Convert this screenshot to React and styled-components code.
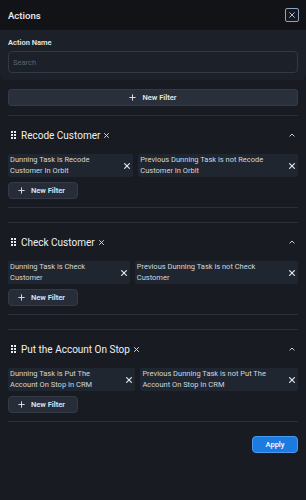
import React from 'react'
import styled, { createGlobalStyle } from 'styled-components'

const GlobalStyle = createGlobalStyle`
  html, body {
    margin: 0;
    padding: 0;
    background: #181b21;
  }
  body {
    font-family: Roboto, 'Liberation Sans', sans-serif;
    color: #e3e6eb;
  }
  * { box-sizing: border-box; }
  svg { flex: none; }
`

const Drawer = styled.div`
  width: 306px;
  height: 500px;
  background: #181b21;
  display: flex;
  flex-direction: column;
  overflow: hidden;
`

const Header = styled.div`
  height: 30px;
  flex: none;
  background: #111317;
  display: flex;
  align-items: center;
  justify-content: space-between;
  padding: 0 7px 0 8px;
`

const Title = styled.h1`
  margin: 0;
  font-size: 9.6px;
  font-weight: 500;
  color: #eceef2;
`

const CloseButton = styled.button`
  width: 14px;
  height: 14px;
  padding: 0;
  display: flex;
  align-items: center;
  justify-content: center;
  background: #15181d;
  border: 1px solid #8ea4c6;
  border-radius: 2px;
  color: #b9bfc8;
`

const NamePanel = styled.div`
  background: #1c2129;
  border-radius: 0 0 6px 6px;
  padding: 8px 8px 7px;
`

const Label = styled.div`
  font-size: 7.5px;
  font-weight: 600;
  line-height: 10px;
  color: #e4e7ec;
  margin-bottom: 3px;
`

const SearchInput = styled.input`
  display: block;
  width: 100%;
  height: 22px;
  background: #1b2029;
  border: 1px solid #323944;
  border-radius: 4px;
  padding: 0 4px;
  font-family: inherit;
  font-size: 7.5px;
  color: #e4e7ec;
  outline: none;
  &::placeholder { color: #5d6470; }
`

const Body = styled.div`
  padding: 9px 8px 0;
  display: flex;
  flex-direction: column;
`

const Button = styled.button`
  height: 17px;
  display: flex;
  align-items: center;
  justify-content: center;
  gap: 6px;
  width: ${p => (p.$wide ? '100%' : '70px')};
  padding: 0 ${p => (p.$wide ? '0' : '3px')} 0 0;
  background: ${p => (p.$wide ? '#29303b' : '#262d38')};
  border: 1px solid #343b47;
  border-radius: ${p => (p.$wide ? '3px' : '4px')};
  font-family: inherit;
  font-size: 7.5px;
  font-weight: 600;
  color: #e2e6ec;
`

const Section = styled.section`
  border-top: 1px solid #2b3038;
  border-bottom: 1px solid #2b3038;
  padding: 8px 0;
  margin-top: ${p => (p.$first ? '9px' : '14px')};
`

const SectionHead = styled.div`
  height: 22px;
  display: flex;
  align-items: center;
  padding: 0 3px;
  margin-bottom: 8px;
`

const SectionTitle = styled.h2`
  margin: 0 0 0 5px;
  font-size: 10px;
  font-weight: 400;
  color: #eef0f3;
`

const RemoveGroup = styled.span`
  margin-left: 4px;
  display: flex;
  align-items: center;
  color: #d5d9df;
`

const Collapse = styled.span`
  margin-left: auto;
  display: flex;
  align-items: center;
  color: #c9ced6;
`

const Chips = styled.div`
  display: flex;
  gap: 5px;
  margin-bottom: 5px;
`

const Chip = styled.div`
  flex: 1 1 auto;
  min-width: 0;
  display: flex;
  align-items: center;
  justify-content: space-between;
  gap: 4px;
  background: #20262f;
  border-radius: 2px;
  padding: 1px 0 1px 2px;
`

const ChipText = styled.span`
  font-size: 7.5px;
  line-height: 10.5px;
  color: #d3d7dd;
`

const ChipRemove = styled.span`
  flex: none;
  width: 12px;
  display: flex;
  align-items: center;
  justify-content: center;
  color: #e2e5ea;
`

const Footer = styled.div`
  display: flex;
  justify-content: flex-end;
  padding: 14px 8px 0;
`

const ApplyButton = styled.button`
  width: 46px;
  height: 17px;
  padding: 0;
  background: #1b7be0;
  border: 1px solid #4a9af0;
  border-radius: 4px;
  font-family: inherit;
  font-size: 7.5px;
  font-weight: 500;
  color: #ffffff;
`

const Cross = ({ size = 6, w = 1.3 }) => (
  <svg width={size} height={size} viewBox="0 0 10 10">
    <path d="M1 1L9 9M9 1L1 9" stroke="currentColor" strokeWidth={w * 10 / size} strokeLinecap="round" />
  </svg>
)

const Plus = () => (
  <svg width="7" height="7" viewBox="0 0 10 10">
    <path d="M5 0.5V9.5M0.5 5H9.5" stroke="currentColor" strokeWidth="1.3" />
  </svg>
)

const Grip = () => (
  <svg width="5" height="8" viewBox="0 0 5 8">
    {[0, 3, 6].map(y => [0, 3].map(x => (
      <rect key={`${x}-${y}`} x={x} y={y} width="2" height="2" fill="#e8ebef" />
    )))}
  </svg>
)

const Chevron = () => (
  <svg width="6" height="4" viewBox="0 0 6 4">
    <path d="M0.6 3.4L3 1L5.4 3.4" stroke="currentColor" strokeWidth="1" fill="none" />
  </svg>
)

const groups = [
  {
    name: 'Recode Customer',
    filters: ['Dunning Task is Recode Customer In Orbit', 'Previous Dunning Task is not Recode Customer In Orbit'],
  },
  {
    name: 'Check Customer',
    filters: ['Dunning Task is Check Customer', 'Previous Dunning Task is not Check Customer'],
  },
  {
    name: 'Put the Account On Stop',
    filters: ['Dunning Task is Put The Account On Stop In CRM', 'Previous Dunning Task is not Put The Account On Stop In CRM'],
  },
]

export default function App() {
  return (
    <>
      <GlobalStyle />
      <Drawer>
        <Header>
          <Title>Actions</Title>
          <CloseButton aria-label="close"><Cross size={6} w={1} /></CloseButton>
        </Header>
        <NamePanel>
          <Label>Action Name</Label>
          <SearchInput placeholder="Search" />
        </NamePanel>
        <Body>
          <Button $wide><Plus />New Filter</Button>
          {groups.map((g, i) => (
            <Section key={g.name} $first={i === 0}>
              <SectionHead>
                <Grip />
                <SectionTitle>{g.name}</SectionTitle>
                <RemoveGroup><Cross size={5} w={1} /></RemoveGroup>
                <Collapse><Chevron /></Collapse>
              </SectionHead>
              <Chips>
                {g.filters.map(f => (
                  <Chip key={f}>
                    <ChipText>{f}</ChipText>
                    <ChipRemove><Cross size={6} w={1.2} /></ChipRemove>
                  </Chip>
                ))}
              </Chips>
              <Button><Plus />New Filter</Button>
            </Section>
          ))}
        </Body>
        <Footer>
          <ApplyButton>Apply</ApplyButton>
        </Footer>
      </Drawer>
    </>
  )
}
